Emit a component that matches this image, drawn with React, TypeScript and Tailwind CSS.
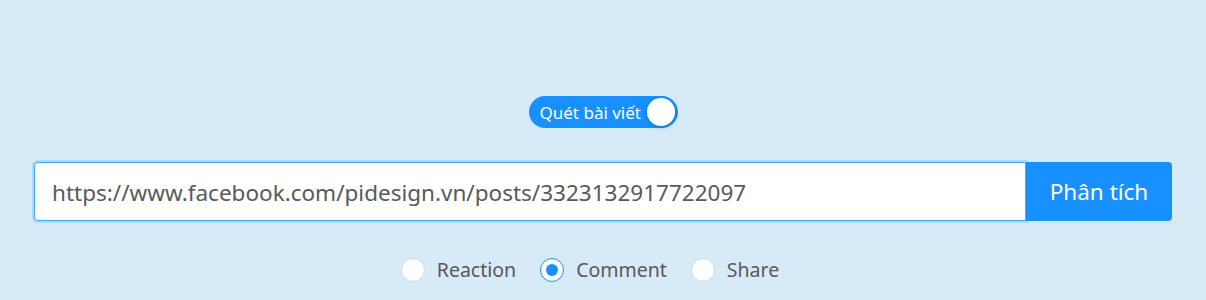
import React, { useState } from "react";

export default function App() {
  const [checked, setChecked] = useState(true);
  const [type, setType] = useState("comment");
  const options = [
    { key: "reaction", label: "Reaction" },
    { key: "comment", label: "Comment" },
    { key: "share", label: "Share" },
  ];
  return (
    <div
      className="w-full h-[300px] bg-[#d6eaf8] flex flex-col items-center pt-[96px]"
      style={{ fontFamily: '"Noto Sans", "Open Sans", sans-serif' }}
    >
      <button
        onClick={() => setChecked(!checked)}
        className="h-[32px] w-[149px] rounded-full bg-[#1890ff] flex items-center pl-[11px] pr-[3px] justify-between"
      >
        <span className="text-white text-[17px] leading-none">Quét bài viết</span>
        <span className="w-[28px] h-[28px] rounded-full bg-white shadow-[0_2px_4px_rgba(0,35,11,0.2)]" />
      </button>

      <div className="mt-[34px] w-full px-[34px] flex">
        <div className="flex-1 h-[59px] bg-white border border-[#40a9ff] rounded-l-[4px] shadow-[0_0_0_2px_rgba(24,144,255,0.2)] flex items-center pl-[17px] pt-[3px]">
          <input
            defaultValue="https://www.facebook.com/pidesign.vn/posts/3323132917722097"
            className="w-full outline-none text-[22.5px] text-[#595959] bg-transparent"
            style={{ fontFamily: '"Noto Sans", "Open Sans", sans-serif' }}
          />
        </div>
        <button className="w-[146px] h-[59px] bg-[#1890ff] text-white text-[22.5px] rounded-r-[4px] pt-[1px]">
          Phân tích
        </button>
      </div>

      <div className="mt-[37px] flex items-center pr-[2px]">
        {options.map((o) => (
          <label
            key={o.key}
            onClick={() => setType(o.key)}
            className="flex items-center cursor-pointer mr-[24px]"
          >
            <span
              className={
                "w-[24px] h-[24px] rounded-full bg-white flex items-center justify-center border " +
                (type === o.key ? "border-[#1890ff]" : "border-[#d9d9d9]")
              }
            >
              {type === o.key && <span className="w-[12px] h-[12px] rounded-full bg-[#1890ff]" />}
            </span>
            <span className="ml-[12px] text-[19.5px] text-[#595959] leading-none">{o.label}</span>
          </label>
        ))}
      </div>
    </div>
  );
}
